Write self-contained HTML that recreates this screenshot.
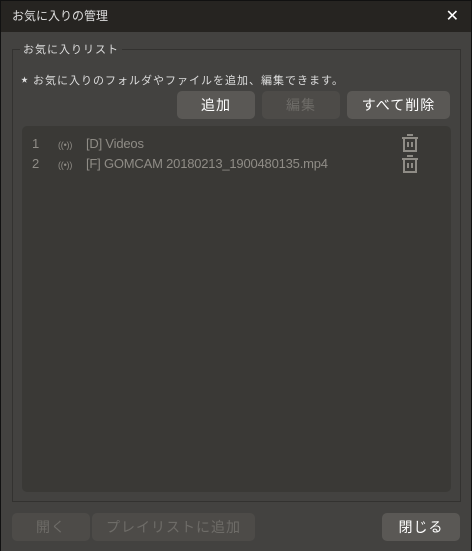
<!DOCTYPE html>
<html><head><meta charset="utf-8"><style>
*{margin:0;padding:0;box-sizing:border-box}
body{width:472px;height:551px;background:#111;font-family:"Liberation Sans","Noto Sans CJK JP",sans-serif;overflow:hidden;position:relative}
.win{position:absolute;left:1px;top:1px;width:470px;height:550px;background:#434240}
.title{position:absolute;left:0;top:0;width:470px;height:31px;background:#262421;color:#ddd;font-size:12px;line-height:31px;padding-left:11px}
.x{position:absolute;right:12px;top:0;color:#fff;font-size:16px}
.grp{position:absolute;left:11px;top:48px;width:449px;height:453px;border:1px solid #333230}
.legend{position:absolute;left:19px;top:40px;background:#434240;color:#ddd;font-size:11px;padding:0 3px;letter-spacing:1px}
.note{position:absolute;left:20px;top:71px;color:#ddd;font-size:11px;letter-spacing:1px}
.note span{font-size:7px;vertical-align:2px}
.btn{position:absolute;height:28px;border-radius:5px;background:#5a5855;color:#fff;font-size:14px;text-align:center;line-height:28px;letter-spacing:1px}
.dis{background:#4d4b48;color:#6e6c68}
.list{position:absolute;left:21px;top:125px;width:429px;height:366px;background:#3a3936;border-radius:5px}
.row{position:absolute;left:10px;color:#8f8c86;font-size:13px;letter-spacing:-0.2px}
.row .n{display:inline-block;width:26px}
.row .i{display:inline-block;width:28px;font-size:9px}
.trash{position:absolute;left:379px}
</style></head><body><div class="win">
<div class="title">お気に入りの管理<span class="x">✕</span></div>
<div class="grp"></div>
<div class="legend">お気に入りリスト</div>
<div class="note"><span>★</span> お気に入りのフォルダやファイルを追加、編集できます。</div>
<div class="btn" style="left:176px;top:90px;width:78px">追加</div>
<div class="btn dis" style="left:261px;top:90px;width:78px">編集</div>
<div class="btn" style="left:346px;top:90px;width:103px">すべて削除</div>
<div class="list">
<div class="row" style="top:10px"><span class="n">1</span><span class="i">((•))</span>[D] Videos</div>
<div class="row" style="top:30px"><span class="n">2</span><span class="i">((•))</span>[F] GOMCAM 20180213_1900480135.mp4</div>
<svg class="trash" style="top:7px" width="18" height="40" viewBox="0 0 18 40" fill="none" stroke="#8f8c86" stroke-width="2"><path d="M6 2h6M1 5h16M3 5v13h12V5M7 9v5M11 9v5"/><path d="M6 23h6M1 26h16M3 26v13h12V26M7 30v5M11 30v5"/></svg>
</div>
<div class="btn dis" style="left:11px;top:512px;width:78px">開く</div>
<div class="btn dis" style="left:91px;top:512px;width:163px">プレイリストに追加</div>
<div class="btn" style="left:381px;top:512px;width:78px">閉じる</div>
</div></body></html>
